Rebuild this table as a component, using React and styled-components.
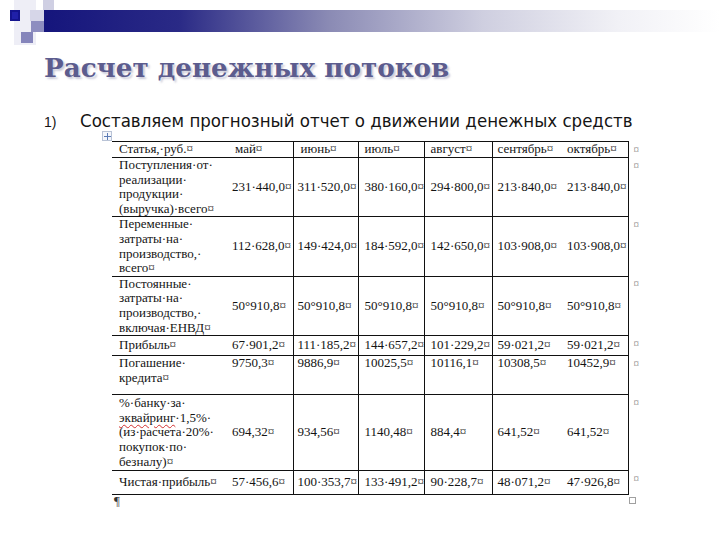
import React from "react";
import styled, { createGlobalStyle } from "styled-components";

const Global = createGlobalStyle`
  html, body { margin: 0; padding: 0; background: #fff; }
`;

const Page = styled.div`
  width: 720px;
  height: 540px;
  overflow: hidden;
  background: #fff;
  display: flex;
  flex-direction: column;
`;

const Decor = styled.svg`
  display: block;
  width: 720px;
  height: 45px;
  flex: none;
`;

const Title = styled.h1`
  margin: 7px 0 0 44px;
  font-family: "DejaVu Serif", "Liberation Serif", serif;
  font-weight: bold;
  font-size: 26.2px;
  line-height: 32px;
  color: #5c5c8e;
  text-shadow: 2px 2px 2px rgba(160, 160, 185, 0.55);
`;

const ListItem = styled.div`
  display: flex;
  align-items: baseline;
  margin: 27px 0 0 44px;
  color: #151515;
`;

const ItemNumber = styled.span`
  width: 36px;
  flex: none;
  font-family: "Liberation Sans", Arial, sans-serif;
  font-size: 14px;
`;

const ItemText = styled.span`
  font-family: "DejaVu Sans Condensed", "DejaVu Sans", sans-serif;
  font-stretch: condensed;
  font-size: 18.5px;
  line-height: 20px;
  white-space: nowrap;
`;

const TableWrap = styled.div`
  position: relative;
  margin: 10px 0 0 112px;
  width: 532px;
`;

const MoveHandle = styled.div`
  position: absolute;
  left: -10px;
  top: -10px;
  width: 8px;
  height: 8px;
  border: 1px solid #b9c3d6;
  background: #f4f6fb;
  display: flex;
  align-items: center;
  justify-content: center;
`;

const ResizeHandle = styled.div`
  position: absolute;
  left: 517px;
  bottom: -9px;
  width: 5px;
  height: 5px;
  border: 1px solid #a0a0a0;
  background: #fff;
`;

const Table = styled.table`
  border-collapse: collapse;
  table-layout: fixed;
  width: 532px;
  font-family: "Liberation Serif", "Times New Roman", serif;
  font-size: 13px;
  line-height: 14.6px;
  color: #141414;
`;

const Row = styled.tr`
  height: ${(p) => p.$h}px;
`;

const Cell = styled.td`
  padding: 0 0 0 ${(p) => p.$pad ?? 5}px;
  border-top: 1px solid #111;
  border-bottom: 1px solid #111;
  border-left: none;
  border-right: ${(p) => (p.$noRight ? "none" : "1px solid #111")};
  vertical-align: ${(p) => (p.$top ? "top" : "middle")};
  white-space: nowrap;
  overflow: hidden;
`;

const MarkCell = styled.td`
  padding: 1px 0 0 5px;
  border: none;
  vertical-align: top;
  font-size: 11px;
  line-height: 12px;
  color: #7a7a7a;
`;

const Wavy = styled.span`
  text-decoration: underline wavy #d23030;
  text-decoration-thickness: 1px;
  text-underline-offset: 2px;
`;

const Below = styled.div`
  margin: 0 0 0 114px;
  font-family: "Liberation Serif", "Times New Roman", serif;
  font-size: 13px;
  line-height: 12px;
  color: #333;
`;

const months = ["май¤", "июнь¤", "июль¤", "август¤", "сентябрь¤", "октябрь¤"];

const rows = [
  {
    h: 58,
    label: ["Поступления·от·", "реализации·", "продукции·", "(выручка)·всего¤"],
    values: ["231·440,0¤", "311·520,0¤", "380·160,0¤", "294·800,0¤", "213·840,0¤", "213·840,0¤"],
  },
  {
    h: 59,
    label: ["Переменные·", "затраты·на·", "производство,·", "всего¤"],
    values: ["112·628,0¤", "149·424,0¤", "184·592,0¤", "142·650,0¤", "103·908,0¤", "103·908,0¤"],
  },
  {
    h: 59,
    label: ["Постоянные·", "затраты·на·", "производство,·", "включая·ЕНВД¤"],
    values: ["50°910,8¤", "50°910,8¤", "50°910,8¤", "50°910,8¤", "50°910,8¤", "50°910,8¤"],
  },
  {
    h: 20,
    label: ["Прибыль¤"],
    values: ["67·901,2¤", "111·185,2¤", "144·657,2¤", "101·229,2¤", "59·021,2¤", "59·021,2¤"],
  },
  {
    h: 39,
    top: true,
    label: ["Погашение·", "кредита¤"],
    values: ["9750,3¤", "9886,9¤", "10025,5¤", "10116,1¤", "10308,5¤", "10452,9¤"],
  },
  {
    h: 76,
    label: [
      "%·банку·за·",
      <>
        <Wavy>эквайринг</Wavy>·1,5%·
      </>,
      "(из·расчета·20%·",
      "покупок·по·",
      "безналу)¤",
    ],
    values: ["694,32¤", "934,56¤", "1140,48¤", "884,4¤", "641,52¤", "641,52¤"],
  },
  {
    h: 24,
    label: ["Чистая·прибыль¤"],
    values: ["57·456,6¤", "100·353,7¤", "133·491,2¤", "90·228,7¤", "48·071,2¤", "47·926,8¤"],
  },
];

const colWidths = [116, 65, 65, 66, 68, 68, 68, 16];
const pads = [7, 4, 4, 6, 6, 5, 7];
const noRight = [true, false, false, false, false, true, false];

function Lines({ items }) {
  return items.map((l, i) => (
    <React.Fragment key={i}>
      {l}
      {i < items.length - 1 && <br />}
    </React.Fragment>
  ));
}

export default function App() {
  return (
    <>
      <Global />
      <Page>
        <Decor viewBox="0 0 720 45">
          <defs>
            <linearGradient id="bar" x1="0" x2="1" y1="0" y2="0">
              <stop offset="0" stopColor="#15157c" />
              <stop offset="0.2" stopColor="#2a2a86" />
              <stop offset="0.42" stopColor="#8a8ab4" />
              <stop offset="0.65" stopColor="#cfcfe0" />
              <stop offset="0.85" stopColor="#f1f1f6" />
              <stop offset="1" stopColor="#ffffff" />
            </linearGradient>
          </defs>
          <rect x="14" y="0" width="22" height="45" fill="#eeeef6" />
          <rect x="43" y="0" width="11" height="12" fill="#cfcfe3" />
          <rect x="30" y="10" width="14" height="11" fill="#d6d6e8" />
          <rect x="31" y="21" width="13" height="11" fill="#8e8ec0" />
          <rect x="44" y="10" width="676" height="22" fill="url(#bar)" />
          <rect x="10" y="10" width="10" height="11" fill="#14148e" />
          <rect x="12" y="12" width="6" height="7" fill="#2020a8" />
          <rect x="21" y="32" width="12" height="11" fill="#8585bb" />
        </Decor>
        <Title>Расчет денежных потоков</Title>
        <ListItem>
          <ItemNumber>1)</ItemNumber>
          <ItemText>Составляем прогнозный отчет о движении денежных средств</ItemText>
        </ListItem>
        <TableWrap>
          <MoveHandle>
            <svg width="7" height="7" viewBox="0 0 7 7">
              <path d="M3.5 0 V7 M0 3.5 H7" stroke="#5b7bb5" strokeWidth="1" />
            </svg>
          </MoveHandle>
          <Table>
            <colgroup>
              {colWidths.map((w, i) => (
                <col key={i} style={{ width: w }} />
              ))}
            </colgroup>
            <tbody>
              <Row $h={16}>
                <Cell $pad={pads[0]} $noRight>Статья,·руб.¤</Cell>
                {months.map((m, i) => (
                  <Cell key={m} $pad={pads[i + 1] + (i < 2 ? 3 : 0)} $noRight={noRight[i + 1]}>
                    {m}
                  </Cell>
                ))}
                <MarkCell>¤</MarkCell>
              </Row>
              {rows.map((r, ri) => (
                <Row key={ri} $h={r.h}>
                  <Cell $pad={pads[0]} $noRight $top={r.top}>
                    <Lines items={r.label} />
                  </Cell>
                  {r.values.map((v, i) => (
                    <Cell key={i} $pad={pads[i + 1]} $noRight={noRight[i + 1]} $top={r.top}>
                      {v}
                    </Cell>
                  ))}
                  <MarkCell>¤</MarkCell>
                </Row>
              ))}
            </tbody>
          </Table>
          <ResizeHandle />
        </TableWrap>
        <Below>¶</Below>
      </Page>
    </>
  );
}
